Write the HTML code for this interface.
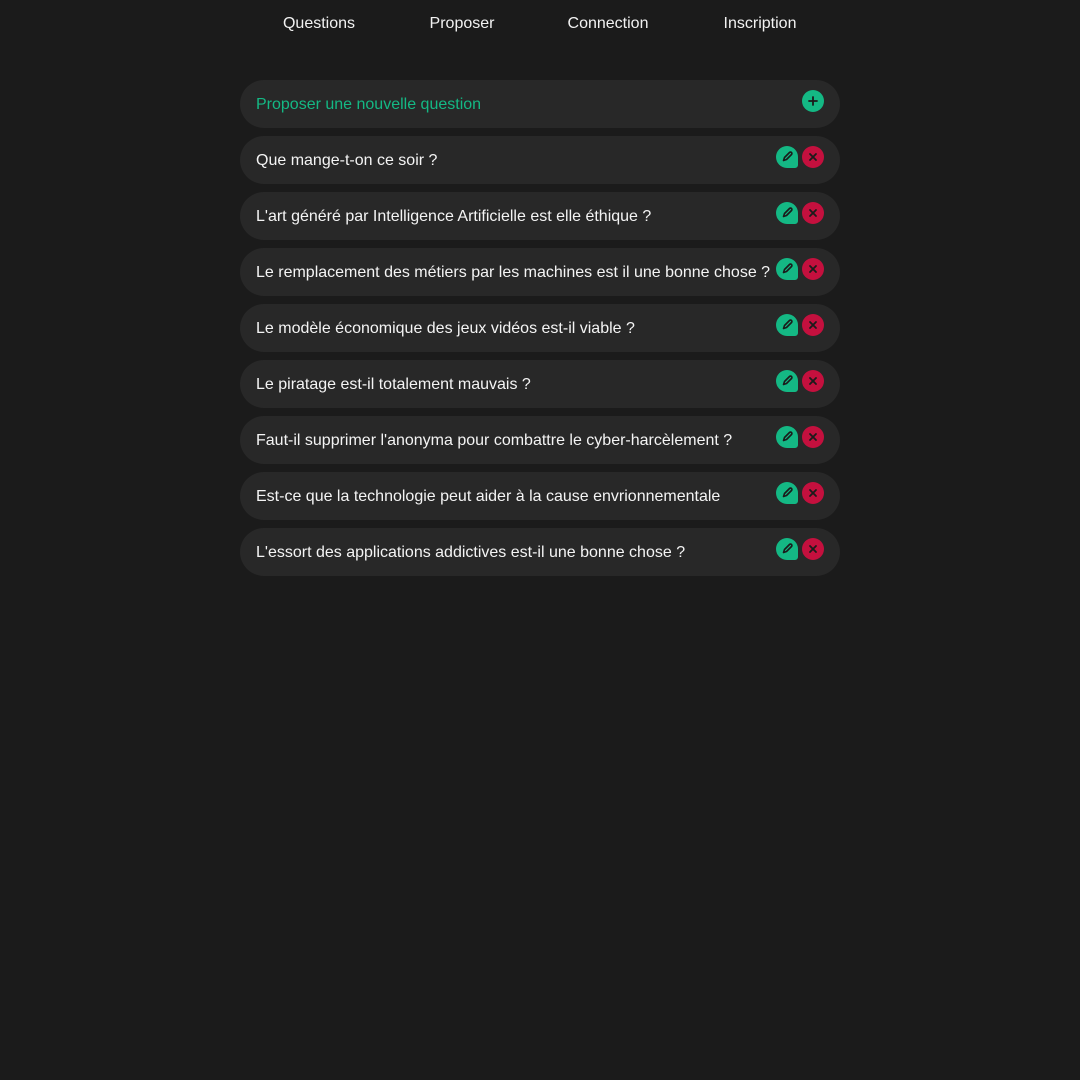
<!DOCTYPE html>
<html><head><meta charset="utf-8">
<style>
html,body{margin:0;padding:0;background:#1b1b1b;width:1080px;height:1080px;overflow:hidden;font-family:"Liberation Sans",sans-serif;}
.nav a{position:absolute;top:15px;color:#f2f2f2;font-size:16px;transform:translateX(-50%);white-space:nowrap;}
.row{position:absolute;left:240px;width:600px;height:48px;border-radius:24px;background:#282828;}
.row span{position:absolute;left:16px;top:16px;color:#f4f4f4;font-size:16px;white-space:nowrap;letter-spacing:0px}
.row.add span{color:#14b884}
.ic{position:absolute;top:10px;width:22px;height:22px;}
.ed{left:536px;background:#14b884;border-radius:11px 11px 3px 11px;}
.dl{left:562px;background:#c4103e;border-radius:50%;}
.pl{left:562px;top:10px;background:#14b884;border-radius:50%;}
svg{position:absolute;left:0;top:0}
</style></head><body>
<div class="nav">
<a style="left:319px">Questions</a>
<a style="left:462px">Proposer</a>
<a style="left:608px">Connection</a>
<a style="left:760px">Inscription</a>
</div>

<div class="row add" style="top:80px"><span>Proposer une nouvelle question</span>
<div class="ic pl"><svg width="22" height="22"><path d="M11 7v8M7 11h8" stroke="#1b1b1b" stroke-width="1.8" stroke-linecap="round"/></svg></div></div>

<div id="list"></div>
<script>
var q=["Que mange-t-on ce soir ?","L'art généré par Intelligence Artificielle est elle éthique ?","Le remplacement des métiers par les machines est il une bonne chose ?","Le modèle économique des jeux vidéos est-il viable ?","Le piratage est-il totalement mauvais ?","Faut-il supprimer l'anonyma pour combattre le cyber-harcèlement ?","Est-ce que la technologie peut aider à la cause envrionnementale","L'essort des applications addictives est-il une bonne chose ?"];
var h="";
q.forEach(function(t,i){
h+='<div class="row" style="top:'+(136+56*i)+'px"><span>'+t.replace(/</g,"&lt;")+'</span>'+
'<div class="ic ed"><svg width="22" height="22"><path d="M7.5 14.5l1-3 5-5a1.4 1.4 0 0 1 2 2l-5 5z" fill="none" stroke="#1b1b1b" stroke-width="1.6" stroke-linejoin="round"/></svg></div>'+
'<div class="ic dl"><svg width="22" height="22"><path d="M8 8l6 6M14 8l-6 6" stroke="#1b1b1b" stroke-width="1.8" stroke-linecap="round"/></svg></div></div>';
});
document.getElementById("list").innerHTML=h;
</script>
</body></html>
